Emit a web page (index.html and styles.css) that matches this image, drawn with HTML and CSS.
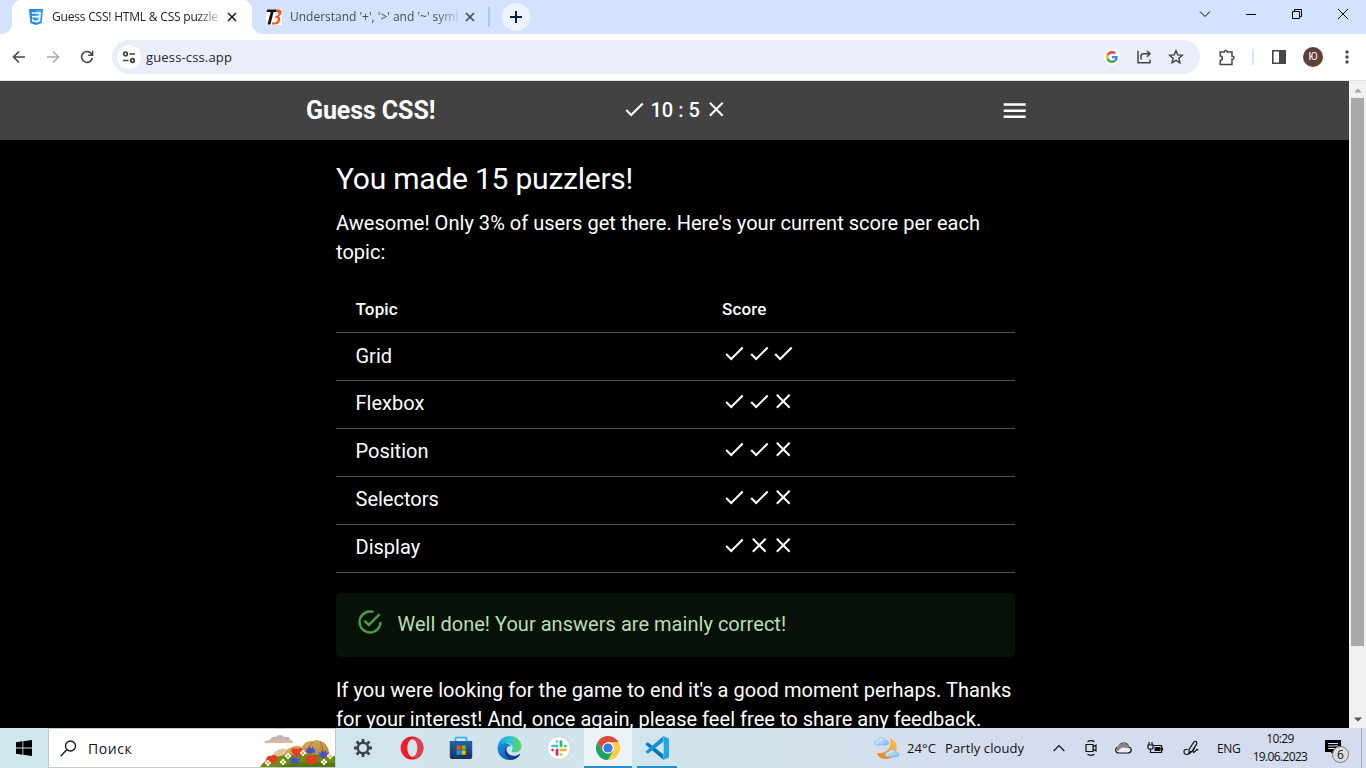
FILE: index.html
```html
<!DOCTYPE html>
<html lang="en">
<head>
<meta charset="utf-8">
<title>Guess CSS! HTML &amp; CSS puzzlers</title>
<link rel="stylesheet" href="styles.css">
</head>
<body>
<svg class="defs" width="0" height="0">
  <symbol id="check" viewBox="0 0 24 24"><path d="M9 16.17 4.83 12l-1.42 1.41L9 19 21 7l-1.41-1.41z"/></symbol>
  <symbol id="cross" viewBox="0 0 24 24"><path d="M19 6.41 17.59 5 12 10.59 6.41 5 5 6.41 10.59 12 5 17.59 6.41 19 12 13.41 17.59 19 19 17.59 13.41 12z"/></symbol>
  <symbol id="tabclose" viewBox="0 0 10 10"><path d="M1 1l8 8M9 1L1 9" fill="none" stroke="currentColor" stroke-width="1.7"/></symbol>
</svg>
<div class="tabs">
  <div class="tab active">
    <svg width="16" height="16" viewBox="0 0 16 16"><path d="M1 0h14l-1.3 14L8 16l-5.700-2z" fill="#1e88e5"/><path d="M8 1h6l-1.100 12L8 14.700z" fill="#42a5f5"/><path d="M3.700 4h8.300l-.7 7.600L8 12.700l-3.200-1.100-.2-2M4 7.600h7.500" fill="none" stroke="#fff" stroke-width="1.700"/></svg>
    <span class="tabtitle t1">Guess CSS! HTML &amp; CSS puzzle</span>
    <svg class="x" width="10" height="10"><use href="#tabclose"/></svg>
  </div>
  <div class="tab second">
    <svg width="16" height="16" viewBox="0 0 16 16"><path fill="#fff" d="M0 0h16v16H0z"/><path d="M1 .5h10L10.300 3H7.600L4.400 15.500H1.500L4.700 3H.4z" fill="#111"/><path d="M11 .5h2.500q3 1 1.700 4.500L13 7.500q2 1 1 4-1 4-5 4H5.500l.7-2H9q2.500-.2 2.800-2.700T9 8.500l.5-1.700q3 0 3-2T10.400 2.500z" fill="#f4511e"/></svg>
    <span class="tabtitle t2">Understand '+', '&gt;' and '~' symb</span>
    <svg class="x" width="10" height="10"><use href="#tabclose"/></svg>
  </div>
  <i class="tabsep"></i>
  <div class="plus"><svg width="12" height="12" viewBox="0 0 12 12"><path d="M6 0v12M0 6h12" stroke="#041e49" stroke-width="2"/></svg></div>
  <div class="winbtns">
    <svg viewBox="0 0 12 12"><path d="M1 3.500l5 5 5-5"/></svg>
    <svg viewBox="0 0 12 12"><path d="M1 6.500h10"/></svg>
    <svg viewBox="0 0 12 12"><path d="M1.500 3.500h7v7h-7zM3.500 3.500v-2h7v7h-2"/></svg>
    <svg viewBox="0 0 12 12"><path d="M1 1l10 10M11 1L1 11"/></svg>
  </div>
</div>
<div class="toolbar">
  <div class="nav">
    <svg viewBox="0 0 14 14"><path d="M13 7H2M7 1.500L1.500 7 7 12.500"/></svg>
    <svg class="dim" viewBox="0 0 14 14"><path d="M1 7h11M7 1.500L12.500 7 7 12.500"/></svg>
    <svg viewBox="0 0 14 14"><path d="M12.300 8A5.400 5.400 0 1 1 11 3.300L12.500 5M12.600 .8V5.200H8.200"/></svg>
  </div>
  <div class="omni">
    <div class="site"><svg width="14" height="14" viewBox="0 0 14 14" fill="none" stroke="#3c4043" stroke-width="1.700"><circle cx="3.500" cy="4" r="1.800"/><path d="M7.500 4H13M1 10.500h5.500"/><circle cx="10.500" cy="10.500" r="1.800"/></svg></div>
    <span class="url">guess-css.app</span>
    <div class="g"><svg width="12" height="12" viewBox="0 0 48 48"><path fill="#EA4335" d="M24 9.500c3.540 0 6.710 1.220 9.210 3.600l6.850-6.850C35.900 2.380 30.470 0 24 0 14.620 0 6.510 5.380 2.560 13.220l7.980 6.190C12.430 13.720 17.740 9.500 24 9.500z"/><path fill="#4285F4" d="M46.980 24.550c0-1.570-.15-3.090-.38-4.550H24v9.020h12.940c-.58 2.960-2.260 5.480-4.780 7.180l7.730 6c4.510-4.180 7.090-10.360 7.090-17.650z"/><path fill="#FBBC05" d="M10.530 28.590c-.48-1.450-.76-2.990-.76-4.590s.27-3.140.76-4.590l-7.980-6.190C.92 16.460 0 20.120 0 24c0 3.880.92 7.540 2.560 10.780l7.970-6.190z"/><path fill="#34A853" d="M24 48c6.480 0 11.930-2.130 15.890-5.810l-7.730-6c-2.150 1.450-4.920 2.300-8.160 2.300-6.260 0-11.570-4.220-13.470-9.910l-7.980 6.190C6.510 42.620 14.620 48 24 48z"/></svg></div>
    <svg class="share" width="14" height="14" viewBox="0 0 14 14"><path d="M1 .8v12h12v-3M4 9.500V6q0-2.300 2.300-2.300H13M10 .7l3 3-3 3"/></svg>
    <svg class="star" width="16" height="16" viewBox="0 0 16 16"><path d="M8 1.800l1.800 4.100 4.500.4-3.400 3 1 4.400L8 11.400l-3.900 2.300 1-4.400-3.400-3 4.500-.4z"/></svg>
  </div>
  <svg class="ext" width="18" height="18" viewBox="0 0 18 18"><path d="M2.200 4h4V3.500a1.600 1.600 0 0 1 3 0V4H14v4.200h.5a1.500 1.500 0 0 1 0 3H14v5.200H2.200v-4q2.200-.2 2.200-2.200T2.200 8z"/></svg>
  <i class="toolsep"></i>
  <svg class="panel" width="14" height="14" viewBox="0 0 14 14"><path d="M.8.800h12.400v12.400H.8z" fill="none" stroke="#444746" stroke-width="1.600"/><path d="M7 1h6v12H7z" fill="#444746"/></svg>
  <div class="avatar">Ю</div>
  <svg class="dots" width="4" height="14" viewBox="0 0 4 14" fill="#444746"><circle cx="2" cy="2" r="1.700"/><circle cx="2" cy="7" r="1.700"/><circle cx="2" cy="12" r="1.700"/></svg>
</div>
<div class="viewport">
  <div class="page">
    <header>
      <div class="brand">Guess CSS!</div>
      <div class="score"><svg class="ic"><use href="#check"/></svg><span>10 : 5</span><svg class="ic"><use href="#cross"/></svg></div>
      <svg class="menu" viewBox="0 0 24 24"><path d="M3 18h18v-2H3zm0-5h18v-2H3zm0-7v2h18V6z"/></svg>
    </header>
    <main>
      <h1>You made 15 puzzlers!</h1>
      <p class="intro">Awesome! Only 3% of users get there. Here's your current score per each topic:</p>
      <div class="table">
        <div class="row head"><span>Topic</span><span>Score</span></div>
        <div class="row"><span>Grid</span><span class="marks"><svg class="ic"><use href="#check"/></svg><svg class="ic"><use href="#check"/></svg><svg class="ic"><use href="#check"/></svg></span></div>
        <div class="row"><span>Flexbox</span><span class="marks"><svg class="ic"><use href="#check"/></svg><svg class="ic"><use href="#check"/></svg><svg class="ic"><use href="#cross"/></svg></span></div>
        <div class="row"><span>Position</span><span class="marks"><svg class="ic"><use href="#check"/></svg><svg class="ic"><use href="#check"/></svg><svg class="ic"><use href="#cross"/></svg></span></div>
        <div class="row"><span>Selectors</span><span class="marks"><svg class="ic"><use href="#check"/></svg><svg class="ic"><use href="#check"/></svg><svg class="ic"><use href="#cross"/></svg></span></div>
        <div class="row"><span>Display</span><span class="marks"><svg class="ic"><use href="#check"/></svg><svg class="ic"><use href="#cross"/></svg><svg class="ic"><use href="#cross"/></svg></span></div>
      </div>
      <div class="alert"><svg width="28" height="28" viewBox="0 0 24 24"><path d="M20,12A8,8 0 0,1 12,20A8,8 0 0,1 4,12A8,8 0 0,1 12,4C12.76,4 13.5,4.11 14.2, 4.31L15.77,2.74C14.61,2.26 13.34,2 12,2A10,10 0 0,0 2,12A10,10 0 0,0 12,22A10,10 0 0,0 22,12M7.91,10.08L6.5,11.5L11,16L21,6L19.59,4.58L11,13.17L7.91,10.08Z"/></svg><span>Well done! Your answers are mainly correct!</span></div>
      <p class="outro">If you were looking for the game to end it's a good moment perhaps. Thanks for your interest! And, once again, please feel free to share any feedback.</p>
    </main>
  </div>
  <div class="scroll">
    <svg width="8" height="5" viewBox="0 0 8 5"><path d="M0 4.500L4 .5l4 4z" fill="#a3a3a3"/></svg>
    <div class="thumb"></div>
    <svg width="8" height="5" viewBox="0 0 8 5"><path d="M0 .5L4 4.500l4-4z" fill="#505050"/></svg>
  </div>
</div>
<div class="taskbar">
  <div class="start"><svg width="16" height="16" viewBox="0 0 16 16"><path d="M0 2.200l6.500-.9v6.200H0zM7.300 1.200L16 0v7.500H7.300zM0 8.400h6.500v6.300L0 13.800zM7.300 8.400H16V16l-8.700-1.200z"/></svg></div>
  <div class="search">
    <svg width="17" height="17" viewBox="0 0 17 17" fill="none" stroke="#111" stroke-width="1.300"><circle cx="10.500" cy="6" r="5"/><path d="M6.800 9.700L.8 16"/></svg>
    <span>Поиск</span>
    <svg class="art" width="75" height="34" viewBox="0 0 75 34">
      <defs><linearGradient id="hill" x1="0" y1="0" x2="1" y2="1"><stop offset="0" stop-color="#e4be72"/><stop offset="1" stop-color="#a8742c"/></linearGradient><linearGradient id="cl" x1="0" y1="0" x2="0" y2="1"><stop offset="0" stop-color="#a5aec9"/><stop offset="1" stop-color="#e8b795"/></linearGradient>
      <g id="daisy"><circle cy="-1.800" r="1.300"/><circle cy="1.800" r="1.300"/><circle cx="-1.800" r="1.300"/><circle cx="1.800" r="1.300"/><circle r="1.200" fill="#f2b319"/></g>
      <path id="corn" d="M0 3L-5 1l2-1.500-2-2 3 .3L-1-5l2 2.400L3-5v3l3-.5-2 2.300L6 1z"/></defs>
      <path d="M4 10q1-3 6-3 2-4 6-3 4-4 8 0 6-1 6 3 4 1 3 3H4z" fill="url(#cl)"/>
      <path d="M10 25q6-11 17-9-4 3-5 8z" fill="#dcc49a"/>
      <path d="M21 24Q31 9 42 14q3-7 11-6 4-2 7 0 7 1 9 11l5 5v9H12z" fill="url(#hill)"/>
      <path d="M53 9q-5 4-5 10M60 8q3 5 3 12" fill="none" stroke="#a8742c"/>
      <path d="M0 34q5-9 20-11 25-4 55 0v11z" fill="#6c8e19"/><path d="M17 34q25-7 58-4v4z" fill="#527713"/>
      <g fill="#e93b20"><path d="M6 27q1-5 5-4 5-3 7 2l-3 5q-6 4-9-3zM31 17q2-3 6-1 5-2 7 2l-3 5q-7 2-10-6zM46 24q2-3 6-1 5-1 6 3-2 6-8 5-5-1-4-7z"/></g>
      <g fill="#4851c6"><use href="#corn" x="34" y="28"/><use href="#corn" x="50" y="18"/><use href="#corn" x="63" y="22"/></g>
      <g fill="#fff"><use href="#daisy" x="8" y="30"/><use href="#daisy" x="23" y="29"/><use href="#daisy" x="28" y="23"/><use href="#daisy" x="43" y="20"/><use href="#daisy" x="64" y="29"/><use href="#daisy" x="70" y="23"/></g>
    </svg>
  </div>
  <div class="apps">
    <div><svg width="18" height="18" viewBox="-9 -9 18 18" stroke="#3d4248" fill="none"><circle r="5.200" stroke-width="2.400"/><path stroke-width="2.800" d="M0-9v3M0 9V6M-9 0h3M9 0H6M-6.400-6.400l2.200 2.200M6.400-6.400L4.200-4.200M-6.400 6.400l2.200-2.200M6.400 6.400L4.200 4.200"/></svg></div>
    <div><svg width="24" height="24" viewBox="0 0 24 24"><defs><linearGradient id="op"><stop offset="0" stop-color="#ff1b2d"/><stop offset="1" stop-color="#b3182c"/></linearGradient></defs><path fill-rule="evenodd" fill="url(#op)" d="M12 .5a11.400 11.500 0 1 0 0 23 11.400 11.500 0 1 0 0-23M12.500 3a5.200 9 0 1 1 0 18 5.200 9 0 1 1 0-18"/><path d="M11.500 3q4-3 8 .5 4.300 4 3.900 9-.5 6-4.900 9-3.500 2-7-.5 6-.2 6.200-9Q17.500 3.300 11.500 3" fill="#e04048"/></svg></div>
    <div><svg width="24" height="24" viewBox="0 0 24 24"><defs><linearGradient id="st" x1="0" y1="0" x2="0" y2="1"><stop offset="0" stop-color="#2164a6"/><stop offset="1" stop-color="#1b2e5e"/></linearGradient></defs><path d="M6.500 6V2.500q0-1 1-1h9q1 0 1 1V6" fill="none" stroke="#28b4e8" stroke-width="1.700"/><path d="M.8 5h22.400v15.500q0 2.500-2.500 2.500H3.300Q.8 23 .8 20.500z" fill="url(#st)"/><path fill="#f25022" d="M7.500 9.500h4.200v4.200H7.500z"/><path fill="#7fba00" d="M12.500 9.500h4.200v4.200h-4.200z"/><path fill="#00a4ef" d="M7.500 14.500h4.200v4.200H7.500z"/><path fill="#ffb900" d="M12.500 14.500h4.200v4.200h-4.200z"/></svg></div>
    <div><svg width="25" height="24" viewBox="0 0 24 24"><defs><linearGradient id="ed"><stop offset="0" stop-color="#159fdc"/><stop offset=".5" stop-color="#2ec4dc"/><stop offset="1" stop-color="#65d84d"/></linearGradient><linearGradient id="e2" x1="0" y1="0" x2="1" y2="1"><stop offset="0" stop-color="#1795df"/><stop offset="1" stop-color="#0c4d9b"/></linearGradient></defs><path fill="url(#ed)" d="M0 11C1 4 6 0 12 0c7 0 12 5 12 10.300 0 4-3 6-6.500 6-3 0-4.200-1-3-2.300 1.500-2 .5-6-4-6.700C6 6.500 1.500 8 0 11"/><path fill="url(#e2)" d="M0 11.500C1 8 5 6.600 8.500 7.200c3 .5 4.500 2 5 3.300C10 9 8 12.500 9 15.500c1.500 4.500 8 5.800 13 2.500q1-.5.500.7C20 22.500 16 24 12 24 5 24 0 18.500 0 12z"/><path fill="#123f88" d="M8.500 11Q5 18 11 22.500q2 1.300 4 1 5-.8 7.500-5-5 3.500-10 .5-4-2.500-4-8"/></svg></div>
    <div><svg width="24" height="24" viewBox="0 0 24 24"><circle cx="12" cy="12" r="11.500" fill="#fff" stroke="#c2c9cc" stroke-width=".8"/><g stroke-width="2.700" stroke-linecap="round"><path d="M10 5.500v.1M5.500 10H10" stroke="#36c5f0"/><path d="M14 5.500V10M18.500 10v.1" stroke="#2eb67d"/><path d="M14 14h4.500M14 18.500v.1" stroke="#ecb22e"/><path d="M10 14v4.500M5.500 14v.1" stroke="#e01e5a"/></g></svg></div>
    <div class="on"><svg width="24" height="24" viewBox="0 0 24 24"><path fill="#dd4b3e" d="M1.600 6A12 12 0 0 1 22.400 6H12l-5.200 9z"/><path fill="#ffcd40" d="M22.400 6A12 12 0 0 1 12 24l5.200-9L12 6z"/><path fill="#1da462" d="M1.600 6A12 12 0 0 0 12 24l5.200-9H6.800z"/><circle cx="12" cy="12" r="5.800" fill="#fff"/><circle cx="12" cy="12" r="4.600" fill="#3b78e7"/></svg></div>
    <div class="run"><svg width="25" height="24" viewBox="0 0 24 24"><path fill="#0875b7" d="M0 8l2.300-1.800L18 18.500V24L.3 8.800z"/><path fill="#1593d8" d="M0 16l2.300 1.800L18 5.500V0L.3 15.200z"/><path fill="#25a8ea" d="M17.500 0L23.500 2.500v19L17.500 24q.7-.5.700-1.500v-21q0-1-.7-1.500"/></svg></div>
  </div>
  <div class="tray">
    <svg class="weather" width="26" height="23" viewBox="0 0 26 23"><defs><linearGradient id="moon" x1="1" y1="0" x2="0" y2="1"><stop offset="0" stop-color="#ffc44e"/><stop offset="1" stop-color="#ee7b17"/></linearGradient><linearGradient id="cloud" x1="0" y1="0" x2="1" y2="1"><stop offset="0" stop-color="#f4faff"/><stop offset="1" stop-color="#75b5ef"/></linearGradient></defs><path fill="url(#moon)" d="M16 1q8 3 6.500 12Q20 23 11 22q-6-.5-8.500-6 8 1 12-4 3-4 1.500-11"/><path id="wcloud" fill="url(#cloud)" stroke="#79b7e9" stroke-width=".6" d="M4 8Q.5 8 .6 5.500T4 3Q5 .3 8 .6t3.600 3q3-.3 3 2.200T11.500 8z"/><use href="#wcloud" x="10.500" y="12"/></svg>
    <span class="temp">24°C</span><span class="wtext">Partly cloudy</span>
    <svg class="chev" width="12" height="8" viewBox="0 0 12 8"><path d="M.7 7L6 1.500 11.300 7"/></svg>
    <svg class="cam" width="12" height="16" viewBox="0 0 12 16"><path d="M1 4.500h7v7H1zM8 7l3-2v6L8 9M2.500 1.700Q6-.5 9.500 1.700M2.500 14.300q3.500 2.200 7 0"/></svg>
    <svg class="cloud" width="17" height="12" viewBox="0 0 17 12"><path d="M4 11Q.7 11 .7 8T4 5Q5 1 9 1t4.500 4Q16.300 5.500 16.300 8T13 11z" fill="#eee"/><path d="M1 8Q3 1 9 1q4 0 5 4.500l-3 .5Q6 4 3 9.500z" fill="#888" stroke="none"/></svg>
    <svg class="bat" width="17" height="13" viewBox="0 0 17 13"><path d="M6.500 3.500h8v7h-9M15.500 5.500v3M1 3h5v3Q6 7 4.500 7h-2Q1 7 1 6zM2 3V0M5 3V0M3.500 7v3.500h2"/><path d="M7.500 5h6v4h-6z" fill="#111" stroke="none"/></svg>
    <svg class="pen" width="16" height="16" viewBox="0 0 16 16"><path d="M4.500 9.500Q1 9 1 11.800t3 2.700Q6.500 14.500 8 11M6 12.500V9.500L11 2q1.500-1.500 2.500 0t-.5 3L8.500 12zM12 7l-2 4q0 2 1.500 1L14 9.500l1.500.5"/></svg>
    <span class="lang">ENG</span>
    <span class="clock"><b>10:29</b><b>19.06.2023</b></span>
    <div class="note"><svg width="16" height="15" viewBox="0 0 16 15"><path d="M0 0h16v12H8.500v3L5.500 12H0z"/><path d="M3 3.500h10M3 6h10M3 8.500h7" stroke="#dce2ef"/></svg><em>6</em></div>
  </div>
</div>
</body>
</html>
```

FILE: styles.css
```css
*{box-sizing:border-box}
body{margin:0;width:1366px;height:768px;overflow:hidden;display:flex;flex-direction:column;background:#000;font-family:"Open Sans","Noto Sans",sans-serif}
.defs{position:absolute}
svg{display:block;flex:none}
i{flex:none}
.tabs{height:34px;background:#d3e3fd;display:flex;align-items:center;flex:none}
.tab{display:flex;align-items:center;height:34px;flex:none}
.active{width:240px;margin-left:12px;padding-left:16px;background:#fff;border-radius:9px 9px 0 0;color:#222;position:relative}
.active::before,.active::after{content:"";position:absolute;bottom:0;width:10px;height:10px}
.active::before{left:-10px;background:radial-gradient(circle at 0 0,#d3e3fd 9.500px,#fff 10px)}
.active::after{right:-10px;background:radial-gradient(circle at 100% 0,#d3e3fd 9.500px,#fff 10px)}
.second{width:236px;padding-left:14px;color:#474c55}
.tabtitle{width:168px;margin-left:8px;white-space:nowrap;font-size:12px;line-height:18px;-webkit-mask-image:linear-gradient(90deg,#000 145px,transparent 172px)}
.t1{letter-spacing:-.2px}
.t2{letter-spacing:-.01px}
.x{margin-left:7px}
.tabsep{width:2px;height:20px;background:#a8c7fa}
.plus{width:28px;height:28px;border-radius:50%;background:#edf3fe;margin-left:12px;display:flex;align-items:center;justify-content:center}
.winbtns{margin-left:auto;display:flex;gap:34px;padding:0 17px 6px 0}
.winbtns svg{width:12px;height:12px;fill:none;stroke:#000}
.toolbar{height:47px;background:#fff;border-bottom:1px solid #dfe1e2;display:flex;align-items:center;flex:none}
.nav{width:112px;padding-left:12px;display:flex;gap:20px}
.nav svg{width:14px;height:14px;fill:none;stroke:#444746;stroke-width:1.6}
.nav .dim{stroke:#aaacac}
.omni{width:1088px;height:34px;border-radius:17px;background:#e9eef8;display:flex;align-items:center}
.site{width:24px;height:24px;margin-left:5px;border-radius:50%;background:#fff;display:flex;align-items:center;justify-content:center}
.url{font-size:13px;margin-left:5px;color:#26282c;letter-spacing:.15px}
.g{width:16px;height:16px;margin-left:auto;border-radius:50%;background:#fff;display:flex;align-items:center;justify-content:center}
.share,.star,.ext{fill:none;stroke:#444746;stroke-width:1.5}
.share{margin-left:17px}
.star{margin:0 16px 0 17px}
.ext{margin-left:18px}
.toolsep{width:2px;height:16px;background:#d3e3fd;margin-left:16px}
.panel{margin-left:18px}
.avatar{width:20px;height:20px;margin-left:17px;border-radius:50%;background:#5d4037;color:#fff;font:10px/20px Roboto,sans-serif;text-align:center}
.dots{margin-left:22px}
.viewport{height:647px;display:flex;flex:none}
.page{width:1349px;height:647px;overflow:hidden;background:#000;color:#fff;font:20px/29px Roboto,sans-serif}
header{height:59px;background:#424242;padding:0 319.5px 0 306px;display:flex;align-items:center}
.brand{width:316px;font-size:25px;font-weight:700;letter-spacing:-.1px}
.score{display:flex;align-items:center;font-weight:500}
.score .ic{margin-bottom:2px}
.score span{margin:0 4px}
.ic{width:24.5px;height:24.5px;fill:#fff}
.menu{width:29.400px;height:29.400px;margin-left:auto;fill:#fff}
main{width:679px;margin-left:336px;padding-top:21px}
h1{margin:0;font-size:30px;line-height:36px;font-weight:400;letter-spacing:-.23px}
p{margin:0;letter-spacing:.03px}
.intro{margin-top:12px}
.table{margin-top:19px}
.row{height:48px;border-bottom:1px solid #515151;display:grid;grid-template-columns:366.5px 1fr;padding-left:19.500px;align-items:center}
.head{font-size:17px;font-weight:500;height:47px;letter-spacing:.15px}
.row:nth-child(n+3){padding-bottom:2px}
.marks{display:flex;padding-bottom:7px}
.row:nth-child(n+3) .marks{padding-bottom:5px}
.alert{height:64px;margin-top:19.500px;background:#071107;border-radius:5px;padding:0 20px 1px;display:flex;align-items:center;color:#b7dfb9;letter-spacing:.03px}
.alert svg{fill:#43a047;margin:0 13.5px 4px 0}
.outro{margin-top:19.500px}
.scroll{width:17px;background:#f1f1f1;display:flex;flex-direction:column;align-items:center;padding:7px 0 6px}
.thumb{width:13px;height:548px;margin:5px 0 auto;background:#a8a8a8}
.taskbar{height:40px;display:flex;flex:none;background:linear-gradient(90deg,#cfe6ec,#d2e3ed 55%,#d5dced 75%,#d5dced);color:#111}
.start{width:48px;display:flex;align-items:center;justify-content:center}
.search{width:288px;background:#fff;border:1px solid #c5cacd;display:flex;align-items:center;padding-left:11px;font-size:14px}
.search span{margin-left:11px;letter-spacing:.6px}
.art{margin:4px 0 0 auto}
.apps{display:flex;padding-left:2px}
.apps div{width:49px;display:flex;align-items:center;justify-content:center}
.apps .on{width:48px;margin-left:1px;background:#ecf3f7;border-bottom:2px solid #268fcb;padding-top:2px}
.apps .run{width:40px;margin-left:5px;border-bottom:2px solid #268fcb;padding-top:2px}
.tray{flex:1;display:flex;align-items:center;font-size:13px;white-space:nowrap}
.weather{margin-left:197px}
.temp{width:38px;margin-left:7px;letter-spacing:.1px}
.wtext{width:80px;letter-spacing:.1px}
.tray .chev,.tray .cam,.tray .cloud,.tray .bat,.tray .pen{fill:none;stroke:#111;stroke-width:1.200}
.chev{margin-left:28px}.cam{margin-left:20px}.cloud{margin-left:18px}.bat{margin-left:15px}.pen{margin-left:19px}
.lang{font-size:12px;width:24px;margin-left:18px;letter-spacing:-.4px}
.clock{width:62px;margin-left:8px;display:flex;flex-direction:column;align-items:center;font-size:12px;line-height:18px;letter-spacing:-.65px}
.note{width:37px;height:40px;margin-left:auto;border-right:1px solid #a5acba;margin-right:4px;position:relative;padding-top:12px}
.clock b{font-weight:400}
.note em{position:absolute;left:7px;top:18px;width:17px;height:17px;border:1px solid #777;border-radius:50%;background:#dcdcdc;font:12px/15px "Open Sans",sans-serif;text-align:center}
```
